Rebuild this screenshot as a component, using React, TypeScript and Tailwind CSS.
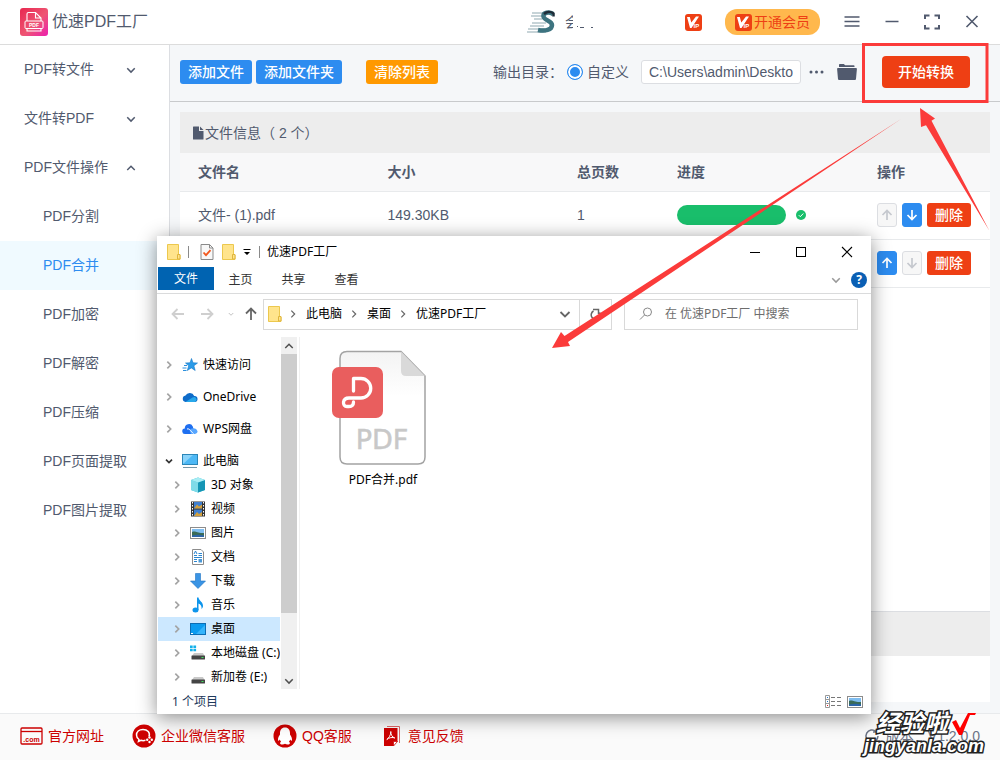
import { useState } from 'react'
import type { ReactNode } from 'react'
import clsx from 'clsx'

const menuGroups = [
  { title: 'PDF转文件', open: false },
  { title: '文件转PDF', open: false },
  { title: 'PDF文件操作', open: true },
]

const menuItems = [
  'PDF分割',
  'PDF合并',
  'PDF加密',
  'PDF解密',
  'PDF压缩',
  'PDF页面提取',
  'PDF图片提取',
]

const files = [
  { name: '文件- (1).pdf', size: '149.30KB', pages: '1', up: false, down: true },
  { name: '', size: '', pages: '', up: true, down: false },
]

export default function App() {
  return (
    <div className="relative flex min-h-screen flex-col overflow-hidden bg-white font-['Liberation_Sans','Noto_Sans_CJK_SC',sans-serif] text-sm text-[#515a6e]">
      <TitleBar />
      <div className="flex flex-1">
        <Sidebar />
        <main className="flex flex-1 flex-col bg-[#f5f7f9]">
          <Toolbar />
          <FileTable />
        </main>
      </div>
      <Footer />
      <ExplorerWindow />
      <Annotations />
      <Watermark />
    </div>
  )
}

function TitleBar() {
  return (
    <header className="flex h-[45px] items-center border-b border-[#dcdcdc] px-5">
      <AppLogo />
      <h1 className="ml-1 text-base">优速PDF工厂</h1>

      <div className="ml-auto flex items-center">
        <Avatar />
        <span className="ml-2.5 w-2 overflow-hidden whitespace-nowrap">会</span>
        <svg className="ml-1 h-4 w-5" viewBox="0 0 20 16" fill="#515a6e">
          <path d="M0 12h1v1H0zM3 13h4v1H3zM14 13h2v1h-2z" />
        </svg>
        <VipIcon className="ml-[88px]" />
        <button className="ml-[23px] flex h-[26px] items-center gap-0.5 rounded-xl bg-[#ffb84d] px-2.5 text-[#ee3f14]">
          <VipIcon />
          开通会员
        </button>
        <button aria-label="菜单" className="ml-6">
          <svg className="h-4 w-4" viewBox="0 0 16 16" stroke="#515a6e" strokeWidth="1.5">
            <path d="M0.5 3h15M0.5 7.500h15M0.5 12h15" />
          </svg>
        </button>
        <button aria-label="最小化" className="ml-6">
          <svg className="h-4 w-4" viewBox="0 0 16 16" stroke="#515a6e" strokeWidth="1.5">
            <path d="M1.500 7.500h13" />
          </svg>
        </button>
        <button aria-label="全屏" className="ml-6">
          <svg className="h-4 w-4" viewBox="0 0 16 16" fill="none" stroke="#515a6e" strokeWidth="2">
            <path d="M1 5V1.500h4.500M10.500 1.500H15V5M15 11v3.500h-4.500M5.500 14.500H1V11" />
          </svg>
        </button>
        <button aria-label="关闭" className="ml-6">
          <svg className="h-4 w-4" viewBox="0 0 16 16" stroke="#515a6e" strokeWidth="1.6">
            <path d="M2.500 2l11 11M13.500 2l-11 11" />
          </svg>
        </button>
      </div>
    </header>
  )
}

function Sidebar() {
  const [active, setActive] = useState('PDF合并')

  return (
    <aside className="w-[170px] shrink-0 border-r border-[#dcdee2]">
      <nav>
        {menuGroups.map(group => (
          <button
            key={group.title}
            className="flex h-[49px] w-full items-center justify-between pb-0.5 pl-6 pr-[33px]"
          >
            {group.title}
            <Chevron dir={group.open ? 'up' : 'down'} className="mt-0.5 h-2.5 w-2.5" />
          </button>
        ))}
        {menuItems.map(item => (
          <button
            key={item}
            onClick={() => setActive(item)}
            className={clsx(
              'flex h-[49px] w-full items-center pb-0.5 pl-[43px]',
              item === active && 'bg-[#f0faff] text-[#2d8cf0]',
            )}
          >
            {item}
          </button>
        ))}
      </nav>
    </aside>
  )
}

function Toolbar() {
  return (
    <section className="flex h-[57px] items-center border-b border-[#c8cacc] pb-0.5 pl-2.5 pr-[30px]">
      <div className="flex items-center gap-1 font-medium text-white">
        <button className="h-6 rounded-[3px] bg-[#2d8cf0] px-2">添加文件</button>
        <button className="h-6 rounded-[3px] bg-[#2d8cf0] px-2">添加文件夹</button>
        <button className="ml-5 h-6 rounded-[3px] bg-[#ff9900] px-2">清除列表</button>
      </div>

      <div className="ml-auto flex items-center">
        <span>输出目录：</span>
        <label className="ml-1 flex items-center gap-1">
          <input
            type="radio"
            defaultChecked
            className="h-4 w-4 appearance-none rounded-full border border-[#2d8cf0] bg-[#2d8cf0] shadow-[inset_0_0_0_2px_white]"
          />
          自定义
        </label>
        <input
          type="text"
          aria-label="输出目录"
          defaultValue="C:\Users\admin\Deskto"
          className="ml-3 h-6 w-40 rounded-[3px] border border-[#dcdee2] bg-white px-[7px]"
        />
        <button aria-label="更多" className="ml-2">
          <svg className="h-4 w-4" viewBox="0 0 16 16" fill="#515a6e">
            <circle cx="2" cy="8" r="1.500" />
            <circle cx="7.500" cy="8" r="1.500" />
            <circle cx="13" cy="8" r="1.500" />
          </svg>
        </button>
        <button aria-label="打开目录" className="ml-3">
          <svg className="h-4 w-5" viewBox="0 0 20 16" fill="#515a6e">
            <path d="M2 3V0.800Q2 0 2.800 0h4l1.400 1.200h8.500q0.800 0 0.800 0.800v1z" />
            <path d="M1 4h18q1 0 0.900 1L19 15q-0.100 1-1 1H2q-0.900 0-1-1L0.100 5Q0 4 1 4z" />
          </svg>
        </button>
        <button className="ml-[25px] h-8 rounded bg-[#ee3f14] px-4 font-medium text-white">
          开始转换
        </button>
      </div>
    </section>
  )
}

function FileTable() {
  return (
    <section className="m-2.5 mb-[11px] flex flex-1 flex-col bg-white">
      <h2 className="flex h-[41px] items-center gap-px bg-[#ededed] pl-3">
        <svg className="h-3.5 w-3" viewBox="0 0 12 14" fill="#515a6e">
          <path d="M1.500 0.500H7V5h4.500v8q0 0.500-0.500 0.500H1.500Q1 13.500 1 13V1q0-0.500 0.500-0.500z" />
          <path d="M8 0.500L11.500 4H8z" />
        </svg>
        文件信息（ 2 个）
      </h2>
      <table className="w-full table-fixed text-left">
        <thead>
          <tr className="h-[38px] border-b border-[#e8eaec] bg-[#f8f8f9]">
            <th className="pl-[18px]">文件名</th>
            <th className="pl-[18px]">大小</th>
            <th className="w-[100px] pl-[18px]">总页数</th>
            <th className="w-[200px] pl-[18px]">进度</th>
            <th className="w-[131px] pl-[18px]">操作</th>
          </tr>
        </thead>
        <tbody>
          {files.map((file, i) => (
            <tr key={i} className="h-12 border-b border-[#e8eaec]">
              <td className="pl-[18px]">{file.name}</td>
              <td className="pl-[18px]">{file.size}</td>
              <td className="pl-[18px]">{file.pages}</td>
              <td className="pl-[18px]">
                <div className="flex items-center gap-2.5">
                  <div className="h-5 w-[109px] rounded-full bg-[#19be6b]" />
                  <svg className="h-2.5 w-2.5" viewBox="0 0 10 10" fill="none">
                    <circle cx="5" cy="5" r="5" fill="#19be6b" />
                    <path d="M2.800 5.200l1.500 1.500 3-3.200" stroke="#fff" />
                  </svg>
                </div>
              </td>
              <td className="pl-[18px]">
                <div className="flex gap-[5px]">
                  <MoveButton dir="up" enabled={file.up} />
                  <MoveButton dir="down" enabled={file.down} />
                  <button className="h-6 rounded-[3px] bg-[#ee3f14] px-2 font-medium text-white">
                    删除
                  </button>
                </div>
              </td>
            </tr>
          ))}
        </tbody>
      </table>
      <div className="mt-auto h-[45px] border-t border-[#dcdee2] bg-[#ededed]" />
      <div className="h-[46px]" />
    </section>
  )
}

function MoveButton({ dir, enabled }: { dir: 'up' | 'down'; enabled: boolean }) {
  return (
    <button
      disabled={!enabled}
      aria-label={dir === 'up' ? '上移' : '下移'}
      className={clsx(
        'flex h-6 w-5 items-center justify-center rounded-[3px] border',
        enabled
          ? 'border-[#2d8cf0] bg-[#2d8cf0] text-white'
          : 'border-[#dcdee2] bg-[#f7f7f7] text-[#c5c8ce]',
      )}
    >
      <svg
        className={clsx('h-3 w-3 shrink-0', dir === 'down' && 'rotate-180')}
        viewBox="0 0 12 12"
        fill="none"
        stroke="currentColor"
        strokeWidth="1.700"
      >
        <path d="M6 11V1.500M1.500 6L6 1.500 10.500 6" />
      </svg>
    </button>
  )
}

function Footer() {
  return (
    <footer className="flex h-[47px] items-center border-t border-[#e8eaec] bg-[#fafafa] px-5 pb-0.5 text-[#c00]">
      <a href="#" className="flex items-center gap-[5px]">
        <svg className="h-5 w-[23px]" viewBox="0 0 23 20" fill="none" stroke="#c00" strokeWidth="1.300">
          <rect x="1" y="2" width="21" height="16" rx="1" />
          <path d="M1 5.500h21" />
          <text x="11.500" y="15.500" textAnchor="middle" fontSize="7" fontWeight="bold" fill="#c00" stroke="none">
            .com
          </text>
        </svg>
        官方网址
      </a>
      <a href="#" className="ml-7 flex items-center gap-[5px]">
        <svg className="h-6 w-6" viewBox="0 0 24 24" fill="none">
          <circle cx="12" cy="12" r="11.500" fill="#c00" />
          <path
            d="M17 12.500c1.500-4-1.500-7-6-7-4 0-6.500 2.500-6.500 5.500 0 2 1 3.500 2.500 4.500l-0.500 2 2.500-1.200c1.500 0.500 3 0.400 4.500 0"
            stroke="#fff"
            strokeWidth="1.500"
          />
          <circle cx="17.500" cy="13.500" r="1.200" fill="#fff" />
          <circle cx="17.500" cy="18" r="1.200" fill="#fff" />
          <circle cx="15.200" cy="15.700" r="1.200" fill="#fff" />
          <circle cx="19.800" cy="15.700" r="1.200" fill="#fff" />
        </svg>
        企业微信客服
      </a>
      <a href="#" className="ml-7 flex items-center gap-[5px]">
        <svg className="h-6 w-6" viewBox="0 0 24 24">
          <circle cx="12" cy="12" r="11.500" fill="#c00" />
          <path
            d="M12 3.500c-3.500 0-5 2.500-5 5.500v1.500c-1 1.500-2.300 3.500-2 5.800 0.100 0.800 1 0.400 1.800-0.900 0.300 1 0.700 1.700 1.300 2.400-1.200 0.500-1.600 2.300 0.300 2.600 1.300 0.200 2.800 0 3.600-0.600 0.800 0.600 2.300 0.800 3.600 0.600 1.900-0.300 1.500-2.100 0.300-2.600 0.600-0.700 1-1.400 1.300-2.400 0.800 1.300 1.700 1.700 1.800 0.900 0.300-2.300-1-4.300-2-5.800V9c0-3-1.500-5.500-5-5.500z"
            fill="#fff"
          />
        </svg>
        QQ客服
      </a>
      <a href="#" className="ml-8 flex items-center gap-2">
        <svg className="h-5 w-4" viewBox="0 0 16 20" fill="none">
          <path d="M3 0.500h12.500V17" stroke="#d66" />
          <path d="M0 2h13.500v13.500L9.500 20H0z" fill="#c00" />
          <path d="M9.500 20v-4.500h4z" fill="#fff" stroke="#c00" strokeWidth="0.700" />
          <path d="M6.800 5.500c0 4-2 6.500-4 8 2-2 6-2.500 8-1.500-3-1-4-3.500-4-6.500z" stroke="#fff" />
        </svg>
        意见反馈
      </a>
      <span className="ml-auto flex items-center gap-1.5 text-[#6b7385]">
        <svg className="h-4 w-4" viewBox="0 0 16 16" fill="none" stroke="currentColor" strokeWidth="1.500">
          <path d="M14 8a6 6 0 1 1-2-4.500M12.500 0.500v3.500H9" />
        </svg>
        版本：V1.2.0.0
      </span>
    </footer>
  )
}

const treeRoots = [
  { name: '快速访问', icon: <StarIcon /> },
  { name: 'OneDrive', icon: <CloudIcon /> },
  { name: 'WPS网盘', icon: <WpsIcon /> },
]

const treeChildren = [
  { name: '3D 对象', icon: <CubeIcon /> },
  { name: '视频', icon: <VideoIcon /> },
  { name: '图片', icon: <PictureIcon /> },
  { name: '文档', icon: <DocIcon /> },
  { name: '下载', icon: <DownloadIcon /> },
  { name: '音乐', icon: <MusicIcon /> },
  { name: '桌面', icon: <DesktopIcon /> },
  { name: '本地磁盘 (C:)', icon: <DiskIcon system /> },
  { name: '新加卷 (E:)', icon: <DiskIcon /> },
]

// Floating file manager, sits on top of the converter
function ExplorerWindow() {
  return (
    <section className="absolute left-[157px] top-[236px] w-[714px] bg-white font-['Noto_Sans','Noto_Sans_CJK_SC',sans-serif] text-xs text-black shadow-[0_3px_18px_rgba(0,0,0,0.45)]">
      <div className="flex h-[31px] items-center pl-2.5">
        <FolderIcon />
        <span className="ml-[7px] h-3 w-px bg-[#8a8a8a]" />
        <svg className="ml-[11px] h-4 w-3.5" viewBox="0 0 14 16" fill="none">
          <path d="M1 0.500h8.500L13 4v11.500H1z" fill="#f8f8f8" stroke="#8a8a8a" />
          <path d="M9.500 0.500V4H13" stroke="#8a8a8a" />
          <path d="M3.500 8.500l2.500 2.700 4.500-5" stroke="#f2581e" strokeWidth="1.800" />
        </svg>
        <span className="ml-2">
          <FolderIcon />
        </span>
        <svg className="ml-[7px] h-2 w-2" viewBox="0 0 8 8">
          <path d="M0.500 1h7v1h-7zM1 4h6L4 7z" />
        </svg>
        <span className="ml-2 h-3 w-px bg-[#8a8a8a]" />
        <span className="ml-[7px]">优速PDF工厂</span>
        <div className="ml-auto flex pr-[18px]">
          <button aria-label="最小化窗口" className="mr-[34px]">
            <svg className="h-3 w-3" viewBox="0 0 12 12" stroke="#000">
              <path d="M1 6.500h10" />
            </svg>
          </button>
          <button aria-label="最大化窗口" className="mr-[34px]">
            <svg className="h-3 w-3" viewBox="0 0 12 12" fill="none" stroke="#000">
              <rect x="1.500" y="1.500" width="9" height="9" />
            </svg>
          </button>
          <button aria-label="关闭窗口">
            <svg className="h-3 w-3" viewBox="0 0 12 12" stroke="#000" strokeWidth="1.100">
              <path d="M1 1l10 10M11 1L1 11" />
            </svg>
          </button>
        </div>
      </div>

      <div className="flex h-[27px] border-b border-[#dadbdc] pl-px">
        <button className="h-[23px] w-14 bg-[#0063b1] text-white">文件</button>
        <button className="h-[26px] w-[53px] text-[#333]">主页</button>
        <button className="h-[26px] w-[53px] text-[#333]">共享</button>
        <button className="h-[26px] w-[53px] text-[#333]">查看</button>
        <Chevron dir="down" className="ml-auto mt-2 h-2.5 w-2.5 text-[#999]" />
        <button
          aria-label="帮助"
          className="ml-2.5 mr-1 mt-[5px] h-4 w-4 rounded-full bg-[#0a5fb4] text-xs font-bold leading-4 text-white"
        >
          ?
        </button>
      </div>

      <div className="flex h-10 items-center pl-3.5 pr-[13px]">
        <ArrowGlyph className="h-3 w-3.5 text-[#cfcfcf]" />
        <ArrowGlyph className="ml-[15px] h-3 w-3.5 rotate-180 text-[#cfcfcf]" />
        <Chevron dir="down" className="ml-3.5 h-1.5 w-1.5 text-[#bbb]" />
        <ArrowGlyph className="ml-2.5 h-3 w-3.5 rotate-90 text-[#666]" />
        <div className="ml-[5px] flex h-[31px] w-[349px] items-center border border-[#d9d9d9] pl-1">
          <FolderIcon />
          <Chevron dir="right" className="ml-[7px] h-2 w-2 text-[#666]" />
          <span className="ml-[9px]">此电脑</span>
          <Chevron dir="right" className="ml-2 h-2 w-2 text-[#666]" />
          <span className="ml-[9px]">桌面</span>
          <Chevron dir="right" className="ml-2 h-2 w-2 text-[#666]" />
          <span className="ml-[9px]">优速PDF工厂</span>
          <Chevron dir="down" className="ml-auto mr-2 h-3 w-3 text-[#666]" />
          <button
            aria-label="刷新"
            className="flex h-full w-8 items-center justify-center border-l border-[#d9d9d9]"
          >
            <svg className="h-3 w-3" viewBox="0 0 12 12" fill="none" stroke="#666" strokeWidth="1.500">
              <path d="M9.500 4.500A4.500 4.500 0 1 1 3.500 3M3 1.500h5.500V6" />
            </svg>
          </button>
        </div>
        <label className="ml-3 flex h-[31px] flex-1 items-center border border-[#d9d9d9] pl-3.5">
          <svg className="h-3.5 w-3.5" viewBox="0 0 14 14" fill="none" stroke="#888">
            <circle cx="8.500" cy="5" r="4" />
            <path d="M5.500 8L1 12.500" />
          </svg>
          <input
            type="text"
            aria-label="搜索"
            placeholder="在 优速PDF工厂 中搜索"
            className="ml-3 min-w-0 flex-1 outline-none placeholder:text-[#6d6d6d]"
          />
        </label>
      </div>

      <div className="flex pt-[3px]">
        <div className="w-[123px] overflow-hidden pl-px pt-2">
          {treeRoots.map(node => (
            <TreeRow key={node.name} className="mt-2" {...node} />
          ))}
          <TreeRow name="此电脑" icon={<ComputerIcon />} open className="mt-2" />
          {treeChildren.map(node => (
            <TreeRow
              key={node.name}
              child
              className={node.name === '桌面' ? 'bg-[#cce8ff]' : ''}
              {...node}
            />
          ))}
        </div>
        <div className="ml-px flex w-4 flex-col items-center bg-[#f0f0f0]">
          <span className="flex h-[17px] items-center">
            <Chevron dir="up" className="h-2.5 w-2.5 text-[#505050]" />
          </span>
          <div className="h-[259px] w-full bg-[#cdcdcd]" />
          <span className="mt-auto flex h-[17px] items-center">
            <Chevron dir="down" className="h-2.5 w-2.5 text-[#505050]" />
          </span>
        </div>
        <div className="ml-0.5 flex-1 border-l border-[#f0f0f0] pl-[25px] pt-2.5">
          <figure className="flex w-[116px] flex-col items-center">
            <PdfFileIcon />
            <figcaption className="mt-[5px]">PDF合并.pdf</figcaption>
          </figure>
        </div>
      </div>

      <div className="flex h-[25px] items-center pl-[15px] pr-2">
        <span className="text-[#1e395b]">1 个项目</span>
        <svg className="ml-auto h-3.5 w-[18px]" viewBox="0 0 18 14" fill="none">
          <path d="M0.500 0.500h4v12h-4zM0.500 4.500h4M0.500 8.500h4" stroke="#999" />
          <path d="M6 2.500h4M12 2.500h4M6 6.500h4M12 6.500h4M6 10.500h4M12 10.500h4" stroke="#777" />
          <path d="M2 2h1v1H2zM2 6h1v1H2z" fill="#27c" />
          <path d="M2 10h1v1H2z" fill="#d22" />
        </svg>
        <span className="ml-1">
          <PictureIcon />
        </span>
      </div>
    </section>
  )
}

function TreeRow({
  name,
  icon,
  open,
  child,
  className,
}: {
  name: string
  icon: ReactNode
  open?: boolean
  child?: boolean
  className?: string
}) {
  return (
    <div
      className={clsx(
        'flex h-6 items-center whitespace-nowrap',
        child ? 'pl-[15px]' : 'pl-[7px]',
        className,
      )}
    >
      <Chevron
        dir={open ? 'down' : 'right'}
        className={clsx(
          'h-2 w-2 shrink-0 [stroke-width:2.5]',
          open ? 'text-[#333]' : 'text-[#a3a3a3]',
        )}
      />
      <span className="ml-[9px] mr-[5px] shrink-0">{icon}</span>
      {name}
    </div>
  )
}

function Chevron({
  dir,
  className,
}: {
  dir: 'up' | 'down' | 'right'
  className?: string
}) {
  const paths = {
    up: 'M1.500 8.500L6 4l4.500 4.500',
    down: 'M1.500 4L6 8.500 10.500 4',
    right: 'M3.500 1L8.500 6l-5 5',
  }
  return (
    <svg className={className} viewBox="0 0 12 12" fill="none" stroke="currentColor" strokeWidth="1.800">
      <path d={paths[dir]} />
    </svg>
  )
}

function ArrowGlyph({ className }: { className?: string }) {
  return (
    <svg className={className} viewBox="0 0 14 12" fill="none" stroke="currentColor" strokeWidth="1.800">
      <path d="M13 6H1.500M6.500 1l-5 5 5 5" />
    </svg>
  )
}

function AppLogo() {
  return (
    <svg className="h-7 w-7" viewBox="0 0 28 28" fill="none">
      <defs>
        <linearGradient id="logo" x1="0" y1="0" x2="1" y2="1">
          <stop offset="0" stopColor="#e8274f" />
          <stop offset="0.550" stopColor="#ee5573" />
          <stop offset="1" stopColor="#ec1fb0" />
        </linearGradient>
      </defs>
      <rect width="28" height="28" rx="3" fill="url(#logo)" />
      <path d="M7 13V6q0-1.500 1.500-1.500h7L21 10v3M15.500 5v5H21" stroke="#fff" strokeWidth="1.100" />
      <rect x="5" y="13" width="18" height="7.500" rx="1" stroke="#fff" />
      <path d="M7 20.500V23h14v-2.500" stroke="#fff" strokeWidth="1.100" />
      <text x="14" y="19" textAnchor="middle" fontSize="5" fontWeight="bold" fill="#fff">
        PDF
      </text>
    </svg>
  )
}

function Avatar() {
  return (
    <svg className="h-6 w-7" viewBox="0 0 28 24" fill="none">
      <path d="M5 3h12M4 6h11M7 9h8M5 13h14M3 16h14M1 19h17M0 22h19" stroke="#8fa8b0" />
      <path
        d="M26 4C22 1.500 16 2.500 16.500 6.500c0.500 4 8.500 4 8.500 8.500 0 5-7 6.500-14 5"
        stroke="#3d7480"
        strokeWidth="4.500"
      />
      <path d="M17 4c3-2.500 7-2.500 9.500-0.500v3" stroke="#1d2c38" strokeWidth="2.500" />
    </svg>
  )
}

function VipIcon({ className }: { className?: string }) {
  return (
    <svg className={clsx('h-[17px] w-[17px]', className)} viewBox="0 0 17 17">
      <rect width="17" height="17" rx="3" fill="#ee3f14" />
      <path d="M2 3h2.800l1.500 5.500L11 2.500h3L6.500 14H5z" fill="#fff" />
      <text x="8.500" y="14" fontSize="6" fontWeight="bold" fill="#fff">
        IP
      </text>
    </svg>
  )
}

function FolderIcon() {
  return (
    <svg className="h-4 w-3.5" viewBox="0 0 14 16">
      <path d="M0.500 0.500h11V11h1.500v4.500H0.500z" fill="#ffe48c" stroke="#ecc84e" />
      <path d="M10.500 15V10.500h2.500V15z" fill="#ffe48c" stroke="#dfb53c" />
    </svg>
  )
}

function StarIcon() {
  return (
    <svg className="h-4 w-4" viewBox="0 0 16 16">
      <path d="M9.500 1.500l1.500 4.300 4.500 0.200-3.600 2.800 1.300 4.700-3.900-2.600-4 2.600 1.400-4.700L3.500 6l4.500-0.200z" fill="#2b9be8" stroke="#1679c8" strokeWidth="0.600" />
      <path d="M0.500 11h4M1 13.500h3.500M2 8.500h3" stroke="#2b8fdd" />
    </svg>
  )
}

function CloudIcon() {
  return (
    <svg className="h-4 w-4" viewBox="0 0 16 16">
      <path d="M3.500 13a3.300 3.300 0 0 1 0-6.500 4.800 4.800 0 0 1 8.700 0.500 3 3 0 0 1 0.600 6z" fill="#0f6cc9" />
      <path d="M3.500 13l7-4.500 2-0.500a2.700 2.700 0 0 1 0.500 5z" fill="#28a8ea" />
    </svg>
  )
}

function WpsIcon() {
  return (
    <svg className="h-4 w-4" viewBox="0 0 16 16">
      <path d="M3.200 13a2.700 2.700 0 0 1-0.400-5.500 4.200 4.200 0 0 1 8-2L13 13z" fill="#1f6ff0" />
      <path d="M9 13L7.500 9.500C9 6 15 6.500 15.500 10.500c0 1.500-1.500 2.500-3 2.500z" fill="#57a6ff" />
      <path d="M5 8c3-1 4 3 6.500 4.500" stroke="#fff" fill="none" />
    </svg>
  )
}

function ComputerIcon() {
  return (
    <svg className="h-4 w-4" viewBox="0 0 16 16">
      <rect x="0.500" y="1.500" width="15" height="10" fill="#4db8f5" stroke="#2b86b8" />
      <path d="M1 11L11 2H1z" fill="#8ad3fa" />
      <path d="M1 14.500h14" stroke="#7797a8" />
    </svg>
  )
}

function CubeIcon() {
  return (
    <svg className="h-4 w-4" viewBox="0 0 16 16">
      <path d="M8 0.500l7 2.500v10l-7 2.500-7-2.500V3z" fill="#35bcd4" />
      <path d="M1 3l7 2.500v10L1 13z" fill="#7fdbe8" />
      <path d="M8 5.500L15 3v10l-7 2.500z" fill="#1595b4" />
      <path d="M8 5.500L1 3l7-2.500L15 3z" fill="#a8edf4" />
    </svg>
  )
}

function VideoIcon() {
  return (
    <svg className="h-4 w-4" viewBox="0 0 16 16">
      <rect x="1" y="0.500" width="14" height="15" fill="#333" />
      <rect x="4" y="1" width="8" height="6.500" fill="#3f7fd0" />
      <rect x="4" y="8.500" width="8" height="6.500" fill="#3f7fd0" />
      <path d="M4 7.500l3-4 2 2 3-2v4zM4 15l3-4 2 2 3-2v4z" fill="#d3a03c" />
      <path d="M2.500 1v14M13.500 1v14" stroke="#fff" strokeDasharray="1.500 1.500" />
    </svg>
  )
}

function PictureIcon() {
  return (
    <svg className="h-4 w-4" viewBox="0 0 16 16">
      <rect x="0.500" y="2.500" width="15" height="11" fill="#fff" stroke="#8c8c8c" />
      <rect x="2" y="4" width="12" height="8" fill="#7fbdf0" />
      <path d="M2 7c4-1.500 5 1.500 12 1v4H2z" fill="#3a6b58" />
      <path d="M2 10.500q6-1.500 12 0V12H2z" fill="#2c65a8" />
    </svg>
  )
}

function DocIcon() {
  return (
    <svg className="h-4 w-4" viewBox="0 0 16 16" fill="none">
      <path d="M2.500 0.500H11L13.500 3v12.500h-11z" fill="#fff" stroke="#8c8c8c" />
      <path d="M4 6.500h3M8.500 4.500H12M8.500 6.500H12M4 8.500h8M4 10.500h3M4 12.500h3" stroke="#2b86d0" />
      <path d="M4 5l1.500-3L7 5" stroke="#2b86d0" />
      <path d="M8.500 10h3.500v3.500H8.500z" fill="#4b98d6" />
    </svg>
  )
}

function DownloadIcon() {
  return (
    <svg className="h-4 w-4" viewBox="0 0 16 16">
      <path d="M5.500 0.500h5V8h5L8 15.500 0.500 8h5z" fill="#3a94e4" stroke="#1f74c4" strokeWidth="0.600" />
    </svg>
  )
}

function MusicIcon() {
  return (
    <svg className="h-4 w-4" viewBox="0 0 16 16" fill="#0d95ec">
      <path d="M7 0.500h1.500c0.500 3.500 5 4.500 4.500 9-0.300 1.200-0.800 2-1.500 2.500 0.500-3-1-4.500-3-5.500V13H7z" />
      <ellipse cx="5.500" cy="13" rx="3" ry="2.500" />
    </svg>
  )
}

function DesktopIcon() {
  return (
    <svg className="h-4 w-4" viewBox="0 0 16 16">
      <rect x="0.500" y="2.500" width="15" height="11" fill="#0a9bf0" stroke="#0b6db4" />
      <path d="M15 4v9L6 13z" fill="#35b4fb" />
      <path d="M1 12.500h2" stroke="#fff" />
    </svg>
  )
}

function DiskIcon({ system }: { system?: boolean }) {
  return (
    <svg className="h-4 w-4" viewBox="0 0 16 16">
      <path d="M4 8h9l1.500 3H2z" fill="#c9c9c9" />
      {system ? (
        <path d="M0 0.500h2.700v2.500H0zM3.400 0.500h2.700v2.500H3.400zM0 3.700h2.700v2.500H0zM3.400 3.700h2.700v2.500H3.400z" fill="#12b0ea" />
      ) : null}
      <rect x="1.500" y="10.500" width="13.500" height="4" rx="0.500" fill="#444" />
      <path d="M11.500 12h2v1h-2z" fill="#3fe05c" />
    </svg>
  )
}

function PdfFileIcon() {
  return (
    <svg className="h-[120px] w-[104px]" viewBox="0 0 104 120" fill="none">
      <defs>
        <linearGradient id="sheet" x1="0" y1="0" x2="0" y2="1">
          <stop offset="0" stopColor="#f3f3f3" />
          <stop offset="0.400" stopColor="#fff" />
        </linearGradient>
      </defs>
      <path
        d="M16 4.500h54L94 29v81q0 7-7 7H16q-7 0-7-7V11.500q0-7 7-7z"
        fill="url(#sheet)"
        stroke="#a3a3a3"
        strokeWidth="1.500"
      />
      <path d="M70 4.500L94 29H75q-5 0-5-5z" fill="#d9d9d9" />
      <rect x="1" y="20" width="51" height="51" rx="7" fill="#e95e5e" />
      <path
        d="M22.500 44V31.500H30a9.700 9.700 0 0 1 0 19.500H18c-7 0-7 8.500-2 8.500h2c3 0 4.500-1.500 4.500-4.500"
        stroke="#fff"
        strokeWidth="3.300"
        strokeLinecap="round"
        strokeLinejoin="round"
      />
      <text
        x="51"
        y="102"
        textAnchor="middle"
        fontSize="27"
        fontFamily="DejaVu Sans"
        fill="#c8c8c8"
        stroke="#c8c8c8"
        strokeWidth="0.500"
      >
        PDF
      </text>
    </svg>
  )
}

// Red frame round the start button plus the two pointers
function Annotations() {
  return (
    <svg
      className="pointer-events-none absolute left-0 top-0 h-[760px] w-[1000px]"
      viewBox="0 0 1000 760"
      fill="#fb3b3a"
    >
      <rect x="863.500" y="44.500" width="123.500" height="57" fill="none" stroke="#fb3b3a" strokeWidth="3" />
      <path d="M552 348l9-16 3.500 4L901 119 568 342l2 4z" />
      <path d="M920 108l15 10.500-3.500 2.200L989.500 231 926 125.300l-5 1.700z" />
    </svg>
  )
}

function Watermark() {
  return (
    <div className="pointer-events-none absolute bottom-1 right-4 flex flex-col font-bold italic leading-none text-white [-webkit-text-stroke:3px_#222] [paint-order:stroke_fill]">
      <div className="flex items-center gap-1 pl-3">
        <span className="text-2xl leading-6">经验啦</span>
        <svg className="h-6 w-6" viewBox="0 0 24 24" fill="#f00">
          <path d="M0 10l4-2 4 8L16 1h8l-1 2h-5L10 23H7z" />
        </svg>
      </div>
      <span className="text-lg leading-5">jingyanla.com</span>
    </div>
  )
}
